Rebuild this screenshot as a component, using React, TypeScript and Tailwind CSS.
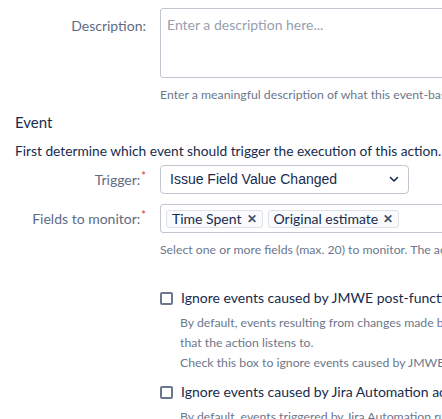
import React from "react";

const font = { fontFamily: 'Lato, "Noto Sans", sans-serif' };

function Tag({ label }: { label: string }) {
  return (
    <span className="flex items-center h-[18px] px-[5px] border border-[#dfe1e6] bg-[#fafbfc] rounded-[3px] text-[14px] text-[#172b4d] leading-none whitespace-nowrap">
      {label}
      <span className="ml-[5px] text-[#42526e] text-[12px] font-bold leading-none">✕</span>
    </span>
  );
}

function Req() {
  return <span className="text-[#de350b] text-[11px] leading-none relative top-[-5px] ml-[1px]">*</span>;
}

export default function App() {
  return (
    <div className="w-[442px] h-[419px] overflow-hidden bg-white" style={font}>
      <div className="w-[700px]">
        {/* Description */}
        <div className="flex pt-[8px]">
          <div className="w-[146px] text-right text-[14px] text-[#5e6c84] pt-[8px] leading-[20px]">Description:</div>
          <div className="ml-[14px] w-[400px] h-[70px] border border-[#c1c7d0] rounded-[3px] px-[6px] pt-[6px] text-[14px] leading-[20px] text-[#97a0af] whitespace-nowrap">
            Enter a description here...
          </div>
        </div>
        <div className="ml-[160px] mt-[8px] text-[12.25px] leading-[18px] text-[#6b778c] whitespace-nowrap">
          Enter a meaningful description of what this event-based action does.
        </div>

        {/* Event */}
        <div className="ml-[15px] mt-[7px] text-[15px] leading-[22px] text-[#172b4d]">Event</div>
        <div className="ml-[15px] mt-[8px] text-[13.75px] leading-[20px] text-[#172b4d] whitespace-nowrap">
          First determine which event should trigger the execution of this action.
        </div>

        {/* Trigger */}
        <div className="flex items-center mt-[4px]">
          <div className="w-[146px] text-right text-[14px] text-[#5e6c84] leading-[20px] whitespace-nowrap">
            Trigger:<Req />
          </div>
          <div
            className="ml-[14px] w-[249px] h-[29px] border border-[#c1c7d0] rounded-[4px] flex items-center justify-between pl-[9px] pr-[9px] text-[14px] text-[#172b4d]"
            style={{ fontFamily: '"Liberation Sans", Arial, sans-serif' }}
          >
            <span>Issue Field Value Changed</span>
            <svg width="10" height="7" viewBox="0 0 10 7" fill="none">
              <path d="M1.5 1.5 L5 5 L8.5 1.5" stroke="#172b4d" strokeWidth="1.6" strokeLinecap="round" strokeLinejoin="round" />
            </svg>
          </div>
        </div>

        {/* Fields to monitor */}
        <div className="flex items-center mt-[10px]">
          <div className="w-[146px] text-right text-[14px] text-[#5e6c84] leading-[20px] whitespace-nowrap">
            Fields to monitor:<Req />
          </div>
          <div className="ml-[14px] w-[400px] h-[29px] border border-[#c1c7d0] rounded-[3px] flex items-center gap-[5px] pl-[5px]">
            <Tag label="Time Spent" />
            <Tag label="Original estimate" />
          </div>
        </div>
        <div className="ml-[160px] mt-[8px] text-[12.25px] leading-[18px] text-[#6b778c] whitespace-nowrap">
          Select one or more fields (max. 20) to monitor. The action will be triggered.
        </div>

        {/* Checkbox 1 */}
        <div className="ml-[160px] mt-[29px] flex items-center">
          <span className="w-[13px] h-[13px] border-[2px] border-[#6b778c] rounded-[2px] shrink-0" />
          <span className="ml-[8px] text-[14px] leading-[20px] text-[#172b4d] whitespace-nowrap">
            Ignore events caused by JMWE post-functions
          </span>
        </div>
        <div className="ml-[180px] mt-[5px] text-[12.25px] leading-[20px] text-[#6b778c] whitespace-nowrap">
          <div>By default, events resulting from changes made by JMWE post-functions trigger</div>
          <div>that the action listens to.</div>
          <div>Check this box to ignore events caused by JMWE post-functions.</div>
        </div>

        {/* Checkbox 2 */}
        <div className="ml-[160px] mt-[9px] flex items-center">
          <span className="w-[13px] h-[13px] border-[2px] border-[#6b778c] rounded-[2px] shrink-0" />
          <span className="ml-[8px] text-[14px] leading-[20px] text-[#172b4d] whitespace-nowrap">
            Ignore events caused by Jira Automation actions
          </span>
        </div>
        <div className="ml-[180px] mt-[5px] text-[12.25px] leading-[20px] text-[#6b778c] whitespace-nowrap">
          <div>By default, events triggered by Jira Automation rules trigger the action.</div>
        </div>
      </div>
    </div>
  );
}
